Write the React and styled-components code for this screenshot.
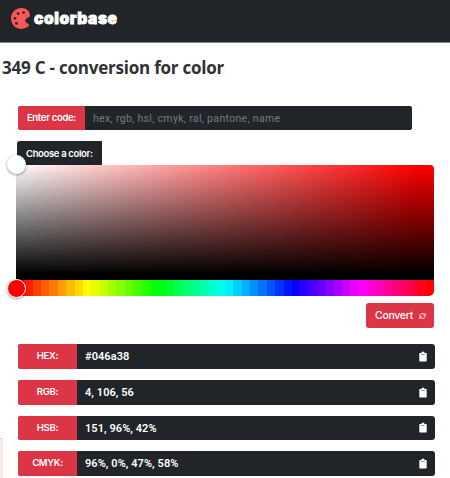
import React from "react";
import styled, { createGlobalStyle } from "styled-components";

const GlobalStyle = createGlobalStyle`
  * {
    box-sizing: border-box;
  }
  body {
    margin: 0;
    background: #fff;
    font-family: Inter, "Liberation Sans", sans-serif;
    overflow: hidden;
  }
`;

const Page = styled.div`
  position: relative;
  height: 478px;
  overflow: hidden;
`;

const Header = styled.header`
  display: flex;
  height: 42px;
  padding: 8px 0 0 11px;
  background: #212529;
  box-shadow: 0 1px 0 #85878a;
`;

const Brand = styled.span`
  margin: 0 0 0 4px;
  color: #fff;
  font-size: 15.5px;
  font-weight: 900;
  line-height: 22px;
  letter-spacing: 0.6px;
  -webkit-text-stroke: 0.8px #fff;
`;

const Title = styled.h1`
  margin: 16px 0 0 2px;
  color: #303235;
  font-family: "Open Sans", "Noto Sans", sans-serif;
  font-size: 17px;
  font-weight: 700;
  line-height: 20px;
  letter-spacing: -0.22px;
  white-space: nowrap;
`;

const CodeGroup = styled.div`
  display: flex;
  width: 394px;
  height: 24px;
  margin: 28px 0 0 18px;
  border-radius: 3px;
  background: #212529;
  overflow: hidden;
`;

const CodeLabel = styled.label`
  width: 67px;
  background: #dc3545;
  color: #fff;
  font-size: 9.5px;
  font-weight: 600;
  line-height: 23px;
  letter-spacing: -0.3px;
  text-align: center;
  white-space: nowrap;
`;

const CodeInput = styled.input`
  flex: 1;
  padding: 0 8px;
  border: 0;
  outline: 0;
  background: #212529;
  color: #fff;
  font-family: Roboto, sans-serif;
  font-size: 10.5px;
  letter-spacing: 0.33px;

  &::placeholder {
    color: #777b80;
    opacity: 1;
  }
`;

const ChooseLabel = styled.div`
  width: 85px;
  height: 24px;
  margin: 11px 0 0 17px;
  padding-left: 9px;
  border-radius: 3px 0 0 0;
  background: #212529;
  color: #fff;
  font-size: 9.5px;
  font-weight: 600;
  line-height: 25px;
  letter-spacing: -0.35px;
  white-space: nowrap;
`;

const Picker = styled.div`
  position: relative;
  width: 418px;
  margin-left: 16px;
`;

const Shade = styled.div`
  height: 115px;
  border-radius: 0 4px 0 0;
  background: linear-gradient(to top, #000 5%, transparent),
    linear-gradient(to right, #fff, #f00 96%);
`;

const HueBar = styled.div`
  display: flex;
  height: 16px;
  border-radius: 0 0 5px 5px;
  overflow: hidden;
`;

const HueStep = styled.div`
  flex: 1;
`;

const Handle = styled.div`
  position: absolute;
  left: -9px;
  top: ${(props) => props.$top};
  width: 19px;
  height: 19px;
  border: 1px solid #fff;
  border-radius: 50%;
  background: ${(props) => props.$color};
  box-shadow: 0 1px 3px rgba(0, 0, 0, 0.4);
`;

const ConvertButton = styled.button`
  display: flex;
  align-items: center;
  gap: 6px;
  width: 68px;
  height: 25px;
  margin: 7px 0 0 366px;
  padding: 0 8px 0 9px;
  border: 0;
  border-radius: 3px;
  background: #dc3545;
  color: #fff;
  font-family: Inter, sans-serif;
  font-size: 10.5px;
  font-weight: 500;
  letter-spacing: -0.3px;
  cursor: pointer;
`;

const Results = styled.div`
  display: grid;
  gap: 11px;
  width: 417px;
  margin: 16px 0 0 18px;
`;

const ResultRow = styled.div`
  display: flex;
  align-items: center;
  height: 24.8px;
  padding-right: 8px;
  border-radius: 3px;
  background: #212529;
  color: #fff;
  overflow: hidden;
`;

const ResultName = styled.div`
  width: 59px;
  height: 100%;
  background: #dc3545;
  font-size: 9.5px;
  font-weight: 600;
  line-height: 24px;
  letter-spacing: -0.3px;
  text-align: center;
`;

const ResultValue = styled.div`
  flex: 1;
  padding-left: 8px;
  font-family: Roboto, sans-serif;
  font-size: 11px;
  font-weight: 600;
  line-height: 25px;
  letter-spacing: 0.06px;
`;

const SideBanner = styled.div`
  position: absolute;
  left: 0;
  top: 438px;
  width: 3px;
  height: 40px;
  border-top: 1px solid #ddd0cf;
  background: #fce8e8;
`;

const hueSteps = Array.from({ length: 50 }, (_, i) => Math.round((i / 49) * 360));

const results = [
  { name: "HEX:", value: "#046a38" },
  { name: "RGB:", value: "4, 106, 56" },
  { name: "HSB:", value: "151, 96%, 42%" },
  { name: "CMYK:", value: "96%, 0%, 47%, 58%" },
];

function PaletteIcon() {
  return (
    <svg width="19" height="21" viewBox="0 0 19 21">
      <path
        d="M10.5 0C4.7 0 0 4.6 0 10.3s4.2 10.5 9.9 10.6c2.8.1 5.9-.9 7.6-2.8.8-1 .5-2-.6-2.5-2.4-1.1-3.2-2.8-2-4.6 1.1-1.5 4-1.1 4-3.7C18.9 3.1 15.2 0 10.5 0Z"
        fill="#f95759"
      />
      <g fill="#212529">
        <circle cx="7.1" cy="5.6" r="1.35" />
        <circle cx="12.5" cy="4.5" r="1.35" />
        <circle cx="4" cy="10.3" r="1.35" />
        <circle cx="5.5" cy="15.4" r="1.35" />
      </g>
    </svg>
  );
}

function RefreshIcon() {
  return (
    <svg width="7" height="8" viewBox="0 0 8 8" fill="none" stroke="#fff" strokeWidth="1.1">
      <path d="M1 3.6C1.2 1.2 4.5.4 6.2 2.3M7.2.8v2.3H5M7 4.4C6.8 6.8 3.5 7.6 1.8 5.7M.8 7.2V4.9H3" />
    </svg>
  );
}

function ClipboardIcon() {
  return (
    <svg width="8" height="11" viewBox="0 0 8 11">
      <path d="M1 2h1.4a1.6 1.6 0 0 1 3.2 0H7a.7.7 0 0 1 .7.7v7a.7.7 0 0 1-.7.7H1a.7.7 0 0 1-.7-.7v-7A.7.7 0 0 1 1 2Z" fill="#fff" />
      <path d="M2.2 3.5h3.6" stroke="#7b7e81" strokeWidth="0.8" />
    </svg>
  );
}

function App() {
  return (
    <Page>
      <GlobalStyle />
      <Header>
        <PaletteIcon />
        <Brand>colorbase</Brand>
      </Header>
      <Title>349 C - conversion for color</Title>
      <CodeGroup>
        <CodeLabel htmlFor="code">Enter code:</CodeLabel>
        <CodeInput id="code" placeholder="hex, rgb, hsl, cmyk, ral, pantone, name" />
      </CodeGroup>
      <ChooseLabel>Choose a color:</ChooseLabel>
      <Picker>
        <Shade />
        <HueBar>
          {hueSteps.map((hue) => (
            <HueStep key={hue} style={{ background: `hsl(${hue}, 100%, 50%)` }} />
          ))}
        </HueBar>
        <Handle $top="-10px" $color="#fff" />
        <Handle $top="114px" $color="#f00" />
      </Picker>
      <ConvertButton>
        Convert
        <RefreshIcon />
      </ConvertButton>
      <Results>
        {results.map((item) => (
          <ResultRow key={item.name}>
            <ResultName>{item.name}</ResultName>
            <ResultValue>{item.value}</ResultValue>
            <ClipboardIcon />
          </ResultRow>
        ))}
      </Results>
      <SideBanner />
    </Page>
  );
}

export default App;
